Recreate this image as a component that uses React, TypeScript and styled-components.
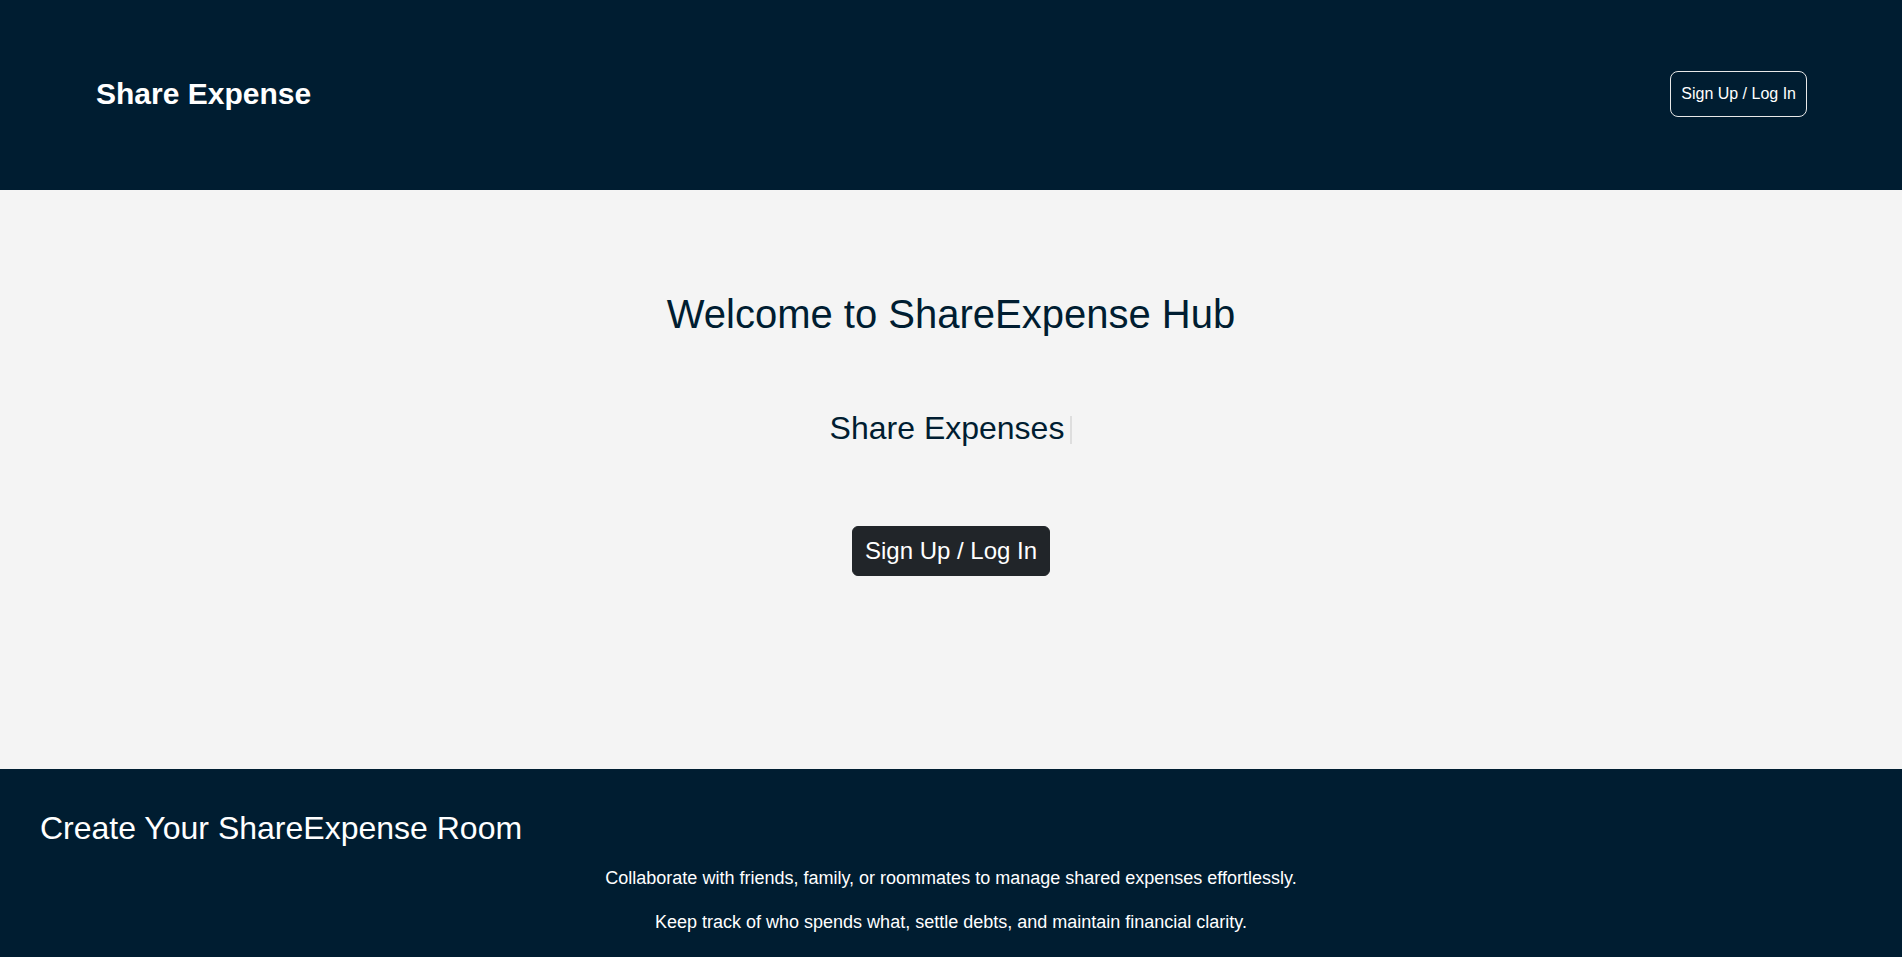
import React from "react";
import styled, { createGlobalStyle } from "styled-components";

const navy = "#001d31";

const GlobalStyle = createGlobalStyle`
  * { box-sizing: border-box; }
  html, body {
    margin: 0;
    padding: 0;
    background: ${navy};
    font-family: "Liberation Sans", Arial, Helvetica, sans-serif;
  }
`;

const Header = styled.header`
  height: 190px;
  padding: 0 95px 2px 96px;
  background: ${navy};
  display: flex;
  align-items: center;
  justify-content: space-between;
`;

const Logo = styled.div`
  color: #ffffff;
  font-size: 30px;
  font-weight: 700;
  line-height: 36px;
`;

const OutlineButton = styled.button`
  font-family: inherit;
  font-size: 16px;
  line-height: 24px;
  padding: 10px 10px;
  color: #ffffff;
  background: transparent;
  border: 1px solid #e8e8e8;
  border-radius: 8px;
  cursor: pointer;
`;

const Hero = styled.main`
  height: 579px;
  padding-top: 100px;
  background: #f4f4f4;
  display: flex;
  flex-direction: column;
  align-items: center;
`;

const Title = styled.h1`
  margin: 0;
  font-size: 40px;
  font-weight: 400;
  line-height: 48px;
  color: ${navy};
`;

const Subtitle = styled.div`
  margin-top: 71px;
  font-size: 32px;
  line-height: 38px;
  color: ${navy};
`;

const Caret = styled.span`
  display: inline-block;
  width: 2px;
  height: 28px;
  margin-left: 6px;
  vertical-align: -5px;
  background: #dedede;
`;

const DarkButton = styled.button`
  margin-top: 79px;
  font-family: inherit;
  font-size: 24px;
  line-height: 36px;
  padding: 6px 12px;
  color: #ffffff;
  background: #212529;
  border: 1px solid #212529;
  border-radius: 6px;
  cursor: pointer;
`;

const Footer = styled.footer`
  background: ${navy};
  padding: 40px 40px 40px;
  color: #ffffff;
`;

const FooterTitle = styled.h2`
  margin: 0 0 18px;
  font-size: 32px;
  font-weight: 400;
  line-height: 38px;
`;

const FooterText = styled.p`
  margin: 0 0 17px;
  font-size: 18px;
  line-height: 27px;
  text-align: center;
`;

export default function App() {
  return (
    <>
      <GlobalStyle />
      <Header>
        <Logo>Share Expense</Logo>
        <OutlineButton>Sign Up / Log In</OutlineButton>
      </Header>
      <Hero>
        <Title>Welcome to ShareExpense Hub</Title>
        <Subtitle>
          Share Expenses
          <Caret />
        </Subtitle>
        <DarkButton>Sign Up / Log In</DarkButton>
      </Hero>
      <Footer>
        <FooterTitle>Create Your ShareExpense Room</FooterTitle>
        <FooterText>
          Collaborate with friends, family, or roommates to manage shared expenses effortlessly.
        </FooterText>
        <FooterText>
          Keep track of who spends what, settle debts, and maintain financial clarity.
        </FooterText>
      </Footer>
    </>
  );
}
